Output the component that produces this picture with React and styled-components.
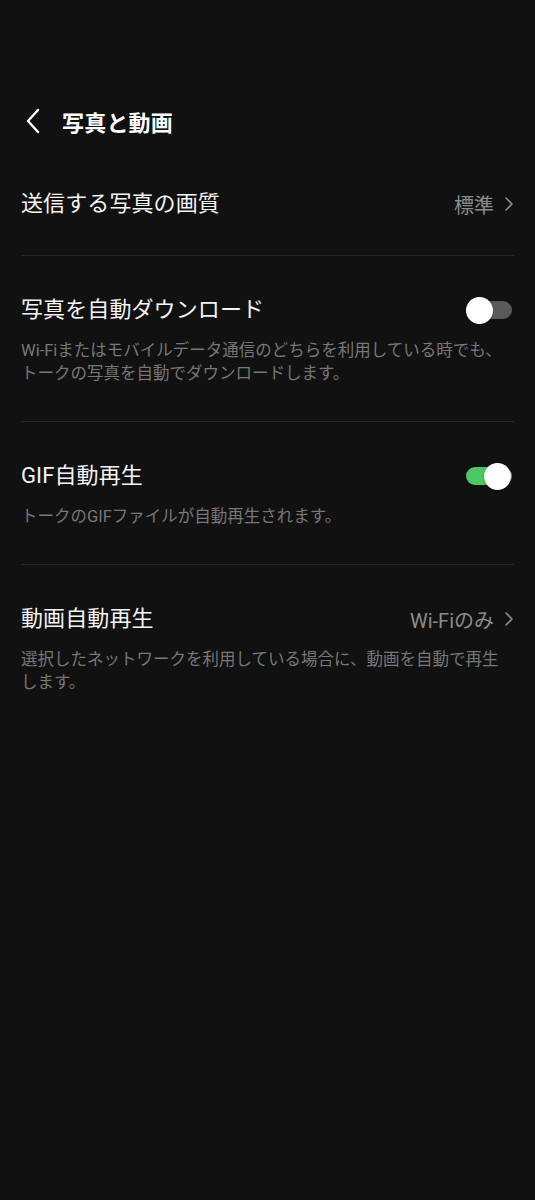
import React, { useState } from 'react';
import styled, { createGlobalStyle } from 'styled-components';

const GlobalStyle = createGlobalStyle`
  html, body {
    margin: 0;
    padding: 0;
    background: #111111;
  }
  body {
    font-family: Roboto, 'Noto Sans CJK JP', sans-serif;
    -webkit-font-smoothing: antialiased;
  }
`;

const Page = styled.div`
  min-height: 1200px;
  background: #111111;
  color: #f2f2f2;
`;

const Header = styled.div`
  display: flex;
  align-items: center;
  height: 58px;
  padding: 92px 0 0 22px;
`;

const BackButton = styled.button`
  display: flex;
  align-items: center;
  justify-content: center;
  width: 22px;
  height: 30px;
  padding: 0;
  margin-right: 18px;
  border: none;
  background: none;
  cursor: pointer;
`;

const HeaderTitle = styled.h1`
  margin: 0;
  font-size: 22px;
  font-weight: 700;
  color: #ffffff;
  letter-spacing: 0.2px;
`;

const List = styled.div`
  display: flex;
  flex-direction: column;
  padding: 0 21px;
`;

const Row = styled.div`
  padding: 39px 0 36px;
  border-bottom: ${(p) => (p.$last ? 'none' : '1px solid #262626')};
`;

const RowTop = styled.div`
  display: flex;
  align-items: center;
  justify-content: space-between;
  height: 30px;
`;

const RowTitle = styled.div`
  font-size: 22px;
  line-height: 30px;
  color: #f4f4f4;
  letter-spacing: 0.1px;
`;

const Value = styled.div`
  display: flex;
  align-items: center;
  gap: 10px;
  font-size: 20px;
  color: #8c8c8c;
`;

const Description = styled.p`
  margin: 14px 0 0;
  font-size: 16.5px;
  line-height: 23px;
  color: #777777;
`;

const ToggleTrack = styled.button`
  position: relative;
  width: 46px;
  height: 18px;
  padding: 0;
  margin-right: 2px;
  border: none;
  border-radius: 9px;
  background: ${(p) => (p.$on ? '#4cc764' : '#5a5a5a')};
  cursor: pointer;
`;

const ToggleKnob = styled.span`
  position: absolute;
  top: -4.5px;
  left: ${(p) => (p.$on ? '18px' : '0')};
  width: 27px;
  height: 27px;
  border-radius: 50%;
  background: #ffffff;
  box-shadow: 0 1px 2px rgba(0, 0, 0, 0.4);
`;

function Chevron() {
  return (
    <svg width="10" height="16" viewBox="0 0 10 16">
      <path
        d="M2 2 L8 8 L2 14"
        fill="none"
        stroke="#8c8c8c"
        strokeWidth="1.6"
        strokeLinecap="round"
        strokeLinejoin="round"
      />
    </svg>
  );
}

function Toggle({ initial }) {
  const [on, setOn] = useState(initial);
  return (
    <ToggleTrack $on={on} onClick={() => setOn(!on)}>
      <ToggleKnob $on={on} />
    </ToggleTrack>
  );
}

export default function App() {
  return (
    <Page>
      <GlobalStyle />
      <Header>
        <BackButton>
          <svg width="18" height="26" viewBox="0 0 18 26">
            <path
              d="M14 2 L4 13 L14 24"
              fill="none"
              stroke="#ffffff"
              strokeWidth="2.4"
              strokeLinecap="round"
              strokeLinejoin="round"
            />
          </svg>
        </BackButton>
        <HeaderTitle>写真と動画</HeaderTitle>
      </Header>
      <List>
        <Row>
          <RowTop>
            <RowTitle>送信する写真の画質</RowTitle>
            <Value>
              標準
              <Chevron />
            </Value>
          </RowTop>
        </Row>
        <Row>
          <RowTop>
            <RowTitle>写真を自動ダウンロード</RowTitle>
            <Toggle initial={false} />
          </RowTop>
          <Description>
            Wi-Fiまたはモバイルデータ通信のどちらを利用している時でも、トークの写真を自動でダウンロードします。
          </Description>
        </Row>
        <Row>
          <RowTop>
            <RowTitle>GIF自動再生</RowTitle>
            <Toggle initial={true} />
          </RowTop>
          <Description>トークのGIFファイルが自動再生されます。</Description>
        </Row>
        <Row $last>
          <RowTop>
            <RowTitle>動画自動再生</RowTitle>
            <Value>
              Wi-Fiのみ
              <Chevron />
            </Value>
          </RowTop>
          <Description>
            選択したネットワークを利用している場合に、動画を自動で再生します。
          </Description>
        </Row>
      </List>
    </Page>
  );
}
